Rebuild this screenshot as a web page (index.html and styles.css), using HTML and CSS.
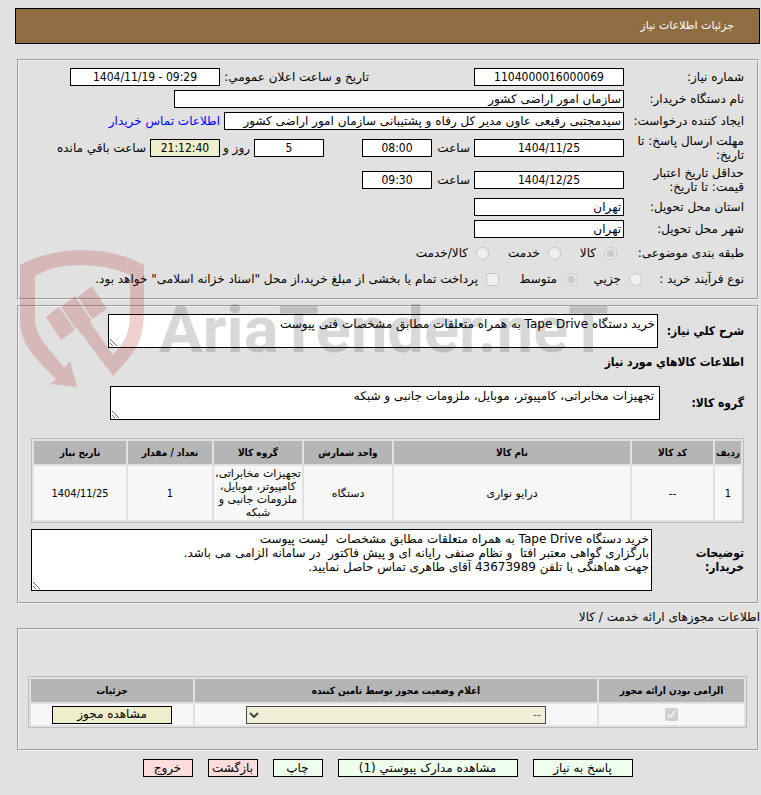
FILE: index.html
```html
<!DOCTYPE html>
<html lang="fa" dir="rtl">
<head>
<meta charset="utf-8">
<title>جزئیات اطلاعات نیاز</title>
<link rel="stylesheet" href="styles.css">
</head>
<body>
<header class="title-bar"><h1>جزئیات اطلاعات نیاز</h1></header>

<form>
<fieldset class="panel need">
  <div class="row">
    <label class="caption" for="need-no">شماره نیاز:</label>
    <input id="need-no" class="box wide number" value="1104000016000069" readonly>
    <label class="caption announce" for="announce">تاریخ و ساعت اعلان عمومي:</label>
    <input id="announce" class="box wide number" dir="ltr" value="1404/11/19 - 09:29" readonly>
  </div>
  <div class="row">
    <label class="caption" for="org">نام دستگاه خریدار:</label>
    <input id="org" class="box org" value="سازمان امور اراضی کشور" readonly>
  </div>
  <div class="row">
    <label class="caption" for="creator">ایجاد کننده درخواست:</label>
    <input id="creator" class="box creator" value="سیدمجتبی رفیعی عاون مدیر کل رفاه و پشتیبانی سازمان امور اراضی کشور" readonly>
    <a class="contact" href="#contact">اطلاعات تماس خریدار</a>
  </div>
  <div class="row tall">
    <label class="caption" for="reply-date">مهلت ارسال پاسخ: تا تاریخ:</label>
    <input id="reply-date" class="box wide number" value="1404/11/25" readonly>
    <label class="unit hour" for="reply-hour">ساعت</label>
    <input id="reply-hour" class="box short number" value="08:00" readonly>
    <input class="box short number days" aria-label="روز" value="5" readonly>
    <label class="unit day" for="remain">روز و</label>
    <input id="remain" class="box short number beige" value="21:12:40" readonly>
    <span class="unit">ساعت باقي مانده</span>
  </div>
  <div class="row tall">
    <label class="caption" for="price-date">حداقل تاریخ اعتبار قیمت: تا تاریخ:</label>
    <input id="price-date" class="box wide number" value="1404/12/25" readonly>
    <label class="unit hour" for="price-hour">ساعت</label>
    <input id="price-hour" class="box short number" value="09:30" readonly>
  </div>
  <div class="row">
    <label class="caption" for="province">استان محل تحویل:</label>
    <input id="province" class="box wide" value="تهران" readonly>
  </div>
  <div class="row">
    <label class="caption" for="city">شهر محل تحویل:</label>
    <input id="city" class="box wide" value="تهران" readonly>
  </div>
  <div class="row choice" role="radiogroup" aria-labelledby="subject">
    <span class="caption subject" id="subject">طبقه بندی موضوعی:</span>
    <label class="option goods"><input type="radio" name="subject" checked disabled>کالا</label>
    <label class="option service"><input type="radio" name="subject" disabled>خدمت</label>
    <label class="option"><input type="radio" name="subject" disabled>کالا/خدمت</label>
  </div>
  <div class="row choice" role="radiogroup" aria-labelledby="process">
    <span class="caption process" id="process">نوع فرآیند خرید :</span>
    <label class="option partial"><input type="radio" name="process" disabled>جزیي</label>
    <label class="option medium"><input type="radio" name="process" checked disabled>متوسط</label>
    <label class="option"><input type="checkbox" disabled>پرداخت تمام یا بخشی از مبلغ خرید،از محل "اسناد خزانه اسلامی" خواهد بود.</label>
  </div>
</fieldset>

<fieldset class="panel goods-panel">
  <div class="area-row">
    <label class="heading" for="summary">شرح کلي نیاز:</label>
    <textarea id="summary" class="area" readonly>خرید دستگاه Tape Drive به همراه متعلقات مطابق مشخصات فنی پیوست</textarea>
  </div>
  <h2 class="heading section">اطلاعات کالاهاي مورد نیاز</h2>
  <div class="area-row">
    <label class="heading group" for="group">گروه کالا:</label>
    <textarea id="group" class="area" readonly>تجهیزات مخابراتی، کامپیوتر، موبایل، ملزومات جانبی و شبکه</textarea>
  </div>
  <table class="grid items">
    <colgroup><col class="c-row"><col class="c-code"><col><col class="c-unit"><col class="c-group"><col class="c-qty"><col class="c-date"></colgroup>
    <thead><tr><th>ردیف</th><th>کد کالا</th><th>نام کالا</th><th>واحد شمارش</th><th>گروه کالا</th><th>تعداد / مقدار</th><th>تاریخ نیاز</th></tr></thead>
    <tbody><tr><td class="number">1</td><td>--</td><td>درایو نواری</td><td>دستگاه</td><td>تجهیزات مخابراتی، کامپیوتر، موبایل، ملزومات جانبی و شبکه</td><td class="number">1</td><td class="number">1404/11/25</td></tr></tbody>
  </table>
  <div class="area-row">
    <label class="heading notes-label" for="notes">توضیحات خریدار:</label>
    <textarea id="notes" class="area notes" readonly>خرید دستگاه Tape Drive به همراه متعلقات مطابق مشخصات  لیست پیوست
بارگزاری گواهی معتبر افتا  و نظام صنفی رایانه ای و پیش فاکتور  در سامانه الزامی می باشد.
جهت هماهنگی با تلفن 43673989 آقای طاهری تماس حاصل نمایید.</textarea>
  </div>
</fieldset>

<p class="permit-title">اطلاعات مجوزهای ارائه خدمت / کالا</p>
<fieldset class="panel permits">
  <table class="grid">
    <colgroup><col class="c-must"><col><col class="c-more"></colgroup>
    <thead><tr><th>الزامی بودن ارائه مجوز</th><th>اعلام وضعیت مجوز توسط تامین کننده</th><th>جزئیات</th></tr></thead>
    <tbody><tr>
      <td><input type="checkbox" class="must" aria-label="الزامی بودن ارائه مجوز" checked disabled></td>
      <td><span class="picker"><select aria-label="اعلام وضعیت مجوز" disabled><option>--</option></select><svg viewBox="0 0 10 6" aria-hidden="true"><path d="M1 1l4 4 4-4"/></svg></span></td>
      <td><button type="button" class="btn beige view">مشاهده مجوز</button></td>
    </tr></tbody>
  </table>
</fieldset>

<div class="actions">
  <button type="button" class="btn green reply">پاسخ به نیاز</button>
  <button type="button" class="btn green docs">مشاهده مدارک پیوستي (1)</button>
  <button type="button" class="btn green">چاپ</button>
  <button type="button" class="btn red">بازگشت</button>
  <button type="button" class="btn red">خروج</button>
</div>
</form>

<svg class="watermark" viewBox="0 0 600 142" direction="ltr" aria-hidden="true">
  <g class="shield">
    <path d="M124 15V53C124 95 118 98 93 126L57 78L56 79L41 57L55 46L71 70L70 72L93 105C104 92 110 86 110 62V25Q88 15 62 15Q33 15 15 26V70C15 88 35 104 44 118L50 111L57 137L30 134L36 129C18 110 0 96 0 70V15Q28 0 62 0Q97 0 124 15Z"/>
    <path d="M26 67L39 57L55 80L41 90Z"/>
    <path d="M58 47L72 36L87 59L72 69Z"/>
  </g>
  <text class="brand" x="139" y="102">AriaTender.neT</text>
</svg>
</body>
</html>
```
FILE: styles.css
```css
* { box-sizing: border-box; }

body {
  position: relative;
  margin: 8px 1px 0 15px;
  background: #e1e1e1;
  color: #000;
  font: 12px/14px "DejaVu Sans", sans-serif;
}

input, textarea, select, button { font: inherit; color: inherit; }

.title-bar {
  display: flex;
  align-items: center;
  height: 36px;
  margin-bottom: 15px;
  padding: 0 25px;
  border: 1px solid #000;
  background: #8f6d40;
  color: #fff;
}
.title-bar h1 { margin: 0; font-size: 11px; font-weight: normal; }

.panel {
  min-width: 0;
  margin: 0 1px 5px 2px;
  padding: 5px 13px 6px 12px;
  border: 2px groove #f0f0f0;
}

.row { display: flex; align-items: center; height: 22px; white-space: nowrap; }
.row.tall { height: 32px; }
.row.choice { height: 26px; }
.caption { flex: none; width: 120px; padding-left: 4px; white-space: normal; }
.caption.announce { width: 149px; margin-right: 105px; padding: 0; white-space: nowrap; }
.caption.subject { width: 127px; }
.caption.process { width: 102px; padding: 0; white-space: nowrap; }

.box {
  flex: none;
  height: 18px;
  margin: 0;
  padding: 0 2px;
  border: 1px solid #000;
  border-radius: 0;
  background: #fff;
}
.wide { width: 150px; }
.short { width: 70px; }
.org { width: 450px; }
.creator { width: 400px; }
.number { font-family: "DejaVu Sans Condensed", "DejaVu Sans", sans-serif; text-align: center; }
.days { margin-right: 38px; }
.beige { background: #eeeecc; }
.unit { padding-right: 4px; }
.hour { width: 42px; }
.day { width: 34px; }
.contact { margin-right: 4px; color: #00f; text-decoration: none; }

.option { display: flex; align-items: center; gap: 8px; }
.option input { flex: none; width: 13px; height: 13px; margin: 0; }
.goods { width: 56px; }
.service { width: 72px; }
.partial { width: 64px; }
.medium { width: 79px; }

.goods-panel { padding-top: 7px; padding-bottom: 11px; margin-bottom: 6px; }
.area-row { display: flex; align-items: center; }
.heading { flex: none; width: 86px; margin: 0; font: bold 12px/14px "DejaVu Sans Condensed", "DejaVu Sans", sans-serif; }
.heading.group { width: 84px; }
.heading.section { width: auto; padding: 7px 0 17px; }
.heading.notes-label { width: 92px; padding-left: 30px; }
.area {
  width: 550px;
  height: 34px;
  margin: 0;
  padding: 2px;
  border: 1px solid #000;
  border-radius: 0;
  background: #fff;
}
#group { padding: 2px 5px; }
.notes { flex: 1; height: 62px; }

.grid {
  width: 100%;
  table-layout: fixed;
  border: 1px solid #bbb;
  border-spacing: 2px;
  text-align: center;
}
.grid th {
  height: 23px;
  padding: 0;
  background: #b5b5b5;
  font: bold 10px/14px "DejaVu Sans Condensed", "DejaVu Sans", sans-serif;
}
.grid td { height: 21px; padding: 1px 0; background: #f7f7f7; font-size: 11px; line-height: 13px; }
.items { margin: 18px 0 6px; }
.c-row { width: 26px; }
.c-code { width: 81px; }
.c-unit { width: 88px; }
.c-group { width: 88px; }
.c-qty { width: 84px; }
.c-date { width: 92px; }

.permit-title { margin: 0 0 4px; }
.permits { padding: 46px 10px 21px 9px; margin-bottom: 8px; }
.c-must { width: 145px; }
.c-more { width: 162px; }
.must { display: block; width: 13px; height: 13px; margin: 0 auto; }
.picker { position: relative; display: block; width: 300px; height: 18px; margin: 0 auto; }
.picker select {
  display: block;
  width: 100%;
  height: 18px;
  padding: 0 4px;
  appearance: none;
  border: 1px solid #000;
  border-radius: 0;
  background: #eeeecc;
  opacity: 0.7;
}
.picker svg { position: absolute; left: 3px; top: 6px; width: 10px; height: 6px; fill: none; stroke: #444; stroke-width: 2; }

.actions { display: flex; justify-content: center; gap: 15px; padding-bottom: 18px; }
.btn { width: 50px; height: 18px; padding: 0; border: 1px solid #000; border-radius: 0; white-space: nowrap; }
.green { background: #eeffee; }
.red { background: #ffdddd; }
.reply { width: 100px; }
.docs { width: 180px; }
.view { display: block; width: 120px; margin: 0 auto; font-size: 12px; }

.watermark { position: absolute; left: 5px; top: 242px; width: 600px; height: 142px; pointer-events: none; }
.shield { fill: #b4191e; opacity: 0.2; }
.brand { fill: #000; opacity: 0.15; font: bold 65px Roboto, "Liberation Sans", sans-serif; direction: ltr; }
```
